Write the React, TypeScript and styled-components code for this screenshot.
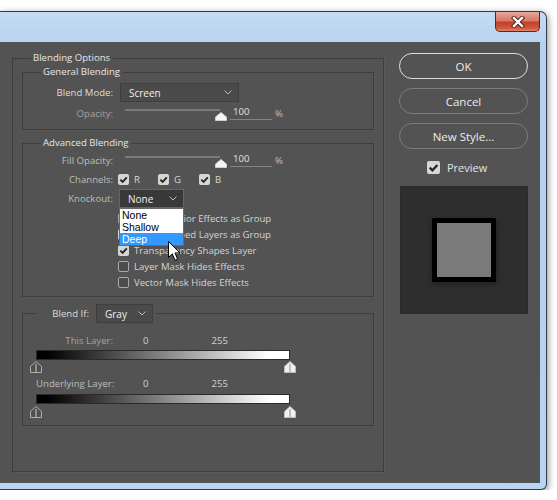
import React from 'react';
import styled, { createGlobalStyle, css } from 'styled-components';

const GlobalStyle = createGlobalStyle`
    html, body {
        margin: 0;
        background: #ffffff;
    }
    body {
        font-family: "Open Sans", "Liberation Sans", Arial, sans-serif;
        font-size: 9.6px;
        -webkit-font-smoothing: antialiased;
    }
`;

const Window = styled.div`
    margin-top: 11px;
    width: 547px;
    box-sizing: border-box;
    border: 1px solid #2f3b47;
    border-left: none;
    border-radius: 0 7px 6px 0;
    background: linear-gradient(to bottom, #c3dbf4, #b5d1ef 40px, #b9d4f0);
    box-shadow: 1px 2px 7px rgba(0, 0, 0, 0.45);
`;

const TitleBar = styled.div`
    height: 30px;
    display: flex;
    justify-content: flex-end;
    align-items: flex-start;
    padding-right: 6px;
`;

const CloseButton = styled.div`
    width: 45px;
    height: 20px;
    box-sizing: border-box;
    border: 1px solid #5c241c;
    border-top: none;
    border-radius: 0 0 5px 5px;
    background: linear-gradient(to bottom, #e9a99c 0%, #d77865 45%, #c2412a 55%, #d0583e 85%, #e2876d 100%);
    display: flex;
    align-items: center;
    justify-content: center;
`;

const Frame = styled.div`
    padding: 0 6px 6px 0;
`;

const Client = styled.div`
    height: 441px;
    background: #535353;
    display: flex;
    align-items: flex-start;
    padding: 0 11px 0 12px;
    box-sizing: border-box;
    color: #c4c4c4;
`;

const Group = styled.fieldset<{ $pad: string; $mt?: number; $w?: number }>`
    margin: ${(p) => p.$mt ?? 0}px 0 0 0;
    padding: ${(p) => p.$pad};
    ${(p) => (p.$w ? `width: ${p.$w}px;` : '')}
    box-sizing: border-box;
    border: 1px solid #3d3d3d;
    box-shadow: 1px 1px 0 rgba(255, 255, 255, 0.04);
    min-inline-size: 0;
    display: flex;
    flex-direction: column;
`;

const Legend = styled.legend<{ $ml: number; $pl?: number }>`
    margin-left: ${(p) => p.$ml}px;
    padding: 0 3px 0 ${(p) => p.$pl ?? 2}px;
    line-height: 12px;
    color: #e6e6e6;
    display: flex;
    align-items: center;
`;

const Row = styled.div<{ $h: number; $mt?: number }>`
    height: ${(p) => p.$h}px;
    margin-top: ${(p) => p.$mt ?? 0}px;
    display: flex;
    align-items: center;
`;

const tones = {
    bright: '#dcdcdc',
    normal: '#bdbdbd',
    dim: '#a2a2a2',
};

const Label = styled.span<{ $w: number; $tone?: keyof typeof tones }>`
    width: ${(p) => p.$w}px;
    flex: none;
    text-align: right;
    white-space: nowrap;
    color: ${(p) => tones[p.$tone ?? 'normal']};
`;

const SelectBox = styled.div<{ $w: number; $ml: number; $focused?: boolean }>`
    position: relative;
    width: ${(p) => p.$w}px;
    height: 19px;
    margin-left: ${(p) => p.$ml}px;
    box-sizing: border-box;
    display: flex;
    align-items: center;
    justify-content: space-between;
    padding: 0 6px 0 8px;
    color: #f0f0f0;
    font-size: 10px;
    ${(p) =>
        p.$focused
            ? css`
                  background: #393939;
                  border: 1px solid #2f6fc4;
              `
            : css`
                  background: #4a4a4a;
                  border: 1px solid #3e3e3e;
              `}
`;

const Slider = styled.div`
    position: relative;
    align-self: stretch;
    width: 95px;
    margin-left: 12px;
`;

const Track = styled.div`
    position: absolute;
    left: 0;
    right: 0;
    top: 7px;
    height: 2px;
    background: #7a7a7a;
`;

const ThumbMark = styled.svg`
    position: absolute;
    left: 90px;
    top: 10px;
`;

const Value = styled.span`
    width: 42px;
    height: 14px;
    box-sizing: border-box;
    margin-left: 10px;
    padding-left: 3px;
    border-bottom: 1px solid #858585;
    color: #e2e2e2;
    line-height: 12px;
`;

const Percent = styled.span`
    margin-left: 3px;
    color: #bdbdbd;
`;

const ChannelItem = styled.span<{ $w: number }>`
    width: ${(p) => p.$w}px;
    display: flex;
    align-items: center;
    gap: 5px;
    color: #d6d6d6;
`;

const Box = styled.span<{ $checked?: boolean; $size?: number }>`
    width: ${(p) => p.$size ?? 11}px;
    height: ${(p) => p.$size ?? 11}px;
    flex: none;
    box-sizing: border-box;
    border-radius: 2px;
    display: flex;
    align-items: center;
    justify-content: center;
    ${(p) =>
        p.$checked
            ? css`
                  background: #d6d6d6;
              `
            : css`
                  border: 1px solid #a9a9a9;
                  background: #4c4c4c;
              `}
`;

const CheckRow = styled.div<{ $mt?: number }>`
    height: 16px;
    margin-top: ${(p) => p.$mt ?? 0}px;
    margin-left: 95px;
    display: flex;
    align-items: center;
    gap: 5px;
    color: #d4d4d4;
`;

const Dropdown = styled.ul`
    position: absolute;
    left: -1px;
    top: 18px;
    width: 65px;
    margin: 0;
    padding: 0;
    list-style: none;
    background: #ffffff;
    border: 1px solid #6a6a6a;
    box-sizing: border-box;
    z-index: 2;
    font-family: "Liberation Sans", Arial, sans-serif;
    font-size: 10.5px;
`;

const Option = styled.li<{ $active?: boolean }>`
    height: 12px;
    line-height: 12px;
    padding-left: 2px;
    color: ${(p) => (p.$active ? '#ffffff' : '#000000')};
    background: ${(p) => (p.$active ? '#3399ff' : 'transparent')};
`;

const Pointer = styled.svg`
    position: absolute;
    left: 48px;
    top: 51px;
    z-index: 3;
`;

const ScaleRow = styled.div<{ $mt: number }>`
    height: 14px;
    margin-top: ${(p) => p.$mt}px;
    display: flex;
    align-items: center;
`;

const Num = styled.span<{ $ml: number }>`
    margin-left: ${(p) => p.$ml}px;
    color: #d0d0d0;
`;

const BlendBar = styled.div<{ $mt: number }>`
    width: 254px;
    height: 10px;
    margin-top: ${(p) => p.$mt}px;
    box-sizing: border-box;
    border: 1px solid #2a2a2a;
    background: linear-gradient(to right, #000000 4%, #ffffff 92%);
`;

const ThumbRow = styled.div<{ $mt: number }>`
    width: 266px;
    height: 12px;
    margin: ${(p) => p.$mt}px 0 0 -6px;
    display: flex;
    justify-content: space-between;
`;

const Side = styled.div`
    width: 129px;
    margin: 11px 0 0 15px;
    display: flex;
    flex-direction: column;
`;

const Button = styled.div<{ $primary?: boolean; $mt?: number }>`
    height: 26px;
    margin-top: ${(p) => p.$mt ?? 0}px;
    box-sizing: border-box;
    border-radius: 13px;
    border: ${(p) => (p.$primary ? '1.5px solid #dedede' : '1px solid #7c7c7c')};
    display: flex;
    align-items: center;
    justify-content: center;
    color: #ececec;
    font-size: 11.5px;
`;

const PreviewToggle = styled.div`
    height: 20px;
    margin-top: 8px;
    padding-left: 28px;
    display: flex;
    align-items: center;
    gap: 7px;
    color: #e4e4e4;
    font-size: 11px;
`;

const PreviewBox = styled.div`
    width: 128px;
    height: 128px;
    margin: 9px 0 0 1px;
    background: #2e2e2e;
    border: 1px solid #2a2a2a;
    box-sizing: border-box;
    display: flex;
    align-items: center;
    justify-content: center;
`;

const Swatch = styled.div`
    width: 64px;
    height: 64px;
    box-sizing: border-box;
    border: 5px solid #000000;
    background: #7a7a7a;
    box-shadow: 1px 2px 6px rgba(0, 0, 0, 0.35);
`;

const Spacer = styled.span<{ $w: number }>`
    width: ${(p) => p.$w}px;
    flex: none;
`;

const Chevron = () => (
    <svg width="8" height="5" viewBox="0 0 8 5">
        <polyline points="0.5,0.5 4,4 7.5,0.5" fill="none" stroke="#bdbdbd" strokeWidth="1" />
    </svg>
);

const Tick = ({ size = 11 }: { size?: number }) => (
    <svg width={size} height={size} viewBox="0 0 11 11">
        <polyline points="2.3,5.6 4.6,7.9 8.8,3.3" fill="none" stroke="#262626" strokeWidth="1.9" />
    </svg>
);

const Check = ({ checked, size }: { checked?: boolean; size?: number }) => (
    <Box $checked={checked} $size={size}>
        {checked && <Tick size={size} />}
    </Box>
);

const SliderThumb = () => (
    <ThumbMark width="12" height="9" viewBox="0 0 12 9">
        <polygon points="6,0.5 11.5,5 11.5,8.5 0.5,8.5 0.5,5" fill="#f4f4f4" stroke="#d0d0d0" strokeWidth="1" />
    </ThumbMark>
);

const SplitThumb = ({ light }: { light?: boolean }) => (
    <svg width="12" height="12" viewBox="0 0 12 12">
        <polygon
            points="6,0.5 11.5,5.5 11.5,11.5 0.5,11.5 0.5,5.5"
            fill={light ? '#f0f0f0' : '#4e4e4e'}
            stroke={light ? '#bcbcbc' : '#b0b0b0'}
            strokeWidth="1"
        />
        <line x1="6" y1="3" x2="6" y2="11" stroke={light ? '#8c8c8c' : '#d0d0d0'} strokeWidth="1" />
    </svg>
);

const PercentField = () => (
    <>
        <Slider>
            <Track />
            <SliderThumb />
        </Slider>
        <Value>100</Value>
        <Percent>%</Percent>
    </>
);

const checkOptions = [
    { label: 'Blend Interior Effects as Group', checked: false },
    { label: 'Blend Clipped Layers as Group', checked: true },
    { label: 'Transparency Shapes Layer', checked: true },
    { label: 'Layer Mask Hides Effects', checked: false },
    { label: 'Vector Mask Hides Effects', checked: false },
];

const App: React.FC = () => {
    return (
        <>
            <GlobalStyle />
            <Window>
                <TitleBar>
                    <CloseButton>
                        <svg width="16" height="12" viewBox="0 0 16 12">
                            <path d="M4,2 L12,10 M12,2 L4,10" stroke="#4a1c16" strokeWidth="4.2" strokeLinecap="square" />
                            <path d="M4,2 L12,10 M12,2 L4,10" stroke="#ffffff" strokeWidth="2.4" strokeLinecap="square" />
                        </svg>
                    </CloseButton>
                </TitleBar>
                <Frame>
                    <Client>
                        <Group $pad="0 9px 45px 9px" $mt={10} $w={372}>
                            <Legend $ml={9}>Blending Options</Legend>

                            <Group $pad="5px 0 5px 0" $mt={2}>
                                <Legend $ml={18}>General Blending</Legend>
                                <Row $h={19}>
                                    <Label $w={90} $tone="bright">Blend Mode:</Label>
                                    <SelectBox $w={119} $ml={7}>
                                        Screen
                                        <Chevron />
                                    </SelectBox>
                                </Row>
                                <Row $h={22}>
                                    <Label $w={90} $tone="dim">Opacity:</Label>
                                    <PercentField />
                                </Row>
                            </Group>

                            <Group $pad="0 0 6px 0" $mt={7}>
                                <Legend $ml={18}>Advanced Blending</Legend>
                                <Row $h={22}>
                                    <Label $w={90}>Fill Opacity:</Label>
                                    <PercentField />
                                </Row>
                                <Row $h={17}>
                                    <Label $w={90}>Channels:</Label>
                                    <Spacer $w={5} />
                                    <ChannelItem $w={40}>
                                        <Check checked />R
                                    </ChannelItem>
                                    <ChannelItem $w={41}>
                                        <Check checked />G
                                    </ChannelItem>
                                    <ChannelItem $w={40}>
                                        <Check checked />B
                                    </ChannelItem>
                                </Row>
                                <Row $h={19} $mt={1}>
                                    <Label $w={90}>Knockout:</Label>
                                    <SelectBox $w={65} $ml={6} $focused>
                                        None
                                        <Chevron />
                                        <Dropdown>
                                            <Option>None</Option>
                                            <Option>Shallow</Option>
                                            <Option $active>Deep</Option>
                                        </Dropdown>
                                        <Pointer width="13" height="21" viewBox="0 0 13 21">
                                            <path
                                                d="M0.5,0.5 L0.5,16.5 L4.3,12.8 L7,19.3 L9.6,18.2 L7,11.9 L12,11.9 Z"
                                                fill="#ffffff"
                                                stroke="#000000"
                                                strokeWidth="1"
                                                strokeLinejoin="round"
                                            />
                                        </Pointer>
                                    </SelectBox>
                                </Row>
                                {checkOptions.map((o, i) => (
                                    <CheckRow key={o.label} $mt={i === 0 ? 2 : 0}>
                                        <Check checked={o.checked} />
                                        {o.label}
                                    </CheckRow>
                                ))}
                            </Group>

                            <Group $pad="10px 0 7px 13px" $mt={7}>
                                <Legend $ml={0} $pl={16}>
                                    <Label $w={37} $tone="bright">Blend If:</Label>
                                    <SelectBox $w={57} $ml={7}>
                                        Gray
                                        <Chevron />
                                    </SelectBox>
                                </Legend>
                                <ScaleRow $mt={0}>
                                    <Label $w={77} $tone="dim">This Layer:</Label>
                                    <Num $ml={30}>0</Num>
                                    <Num $ml={63}>255</Num>
                                </ScaleRow>
                                <BlendBar $mt={3} />
                                <ThumbRow $mt={1}>
                                    <SplitThumb />
                                    <SplitThumb light />
                                </ThumbRow>
                                <ScaleRow $mt={3}>
                                    <Label $w={77}>Underlying Layer:</Label>
                                    <Num $ml={30}>0</Num>
                                    <Num $ml={63}>255</Num>
                                </ScaleRow>
                                <BlendBar $mt={4} />
                                <ThumbRow $mt={2}>
                                    <SplitThumb />
                                    <SplitThumb light />
                                </ThumbRow>
                            </Group>
                        </Group>

                        <Side>
                            <Button $primary>OK</Button>
                            <Button $mt={9}>Cancel</Button>
                            <Button $mt={9}>New Style...</Button>
                            <PreviewToggle>
                                <Check checked size={13} />
                                Preview
                            </PreviewToggle>
                            <PreviewBox>
                                <Swatch />
                            </PreviewBox>
                        </Side>
                    </Client>
                </Frame>
            </Window>
        </>
    );
};

export default App;
